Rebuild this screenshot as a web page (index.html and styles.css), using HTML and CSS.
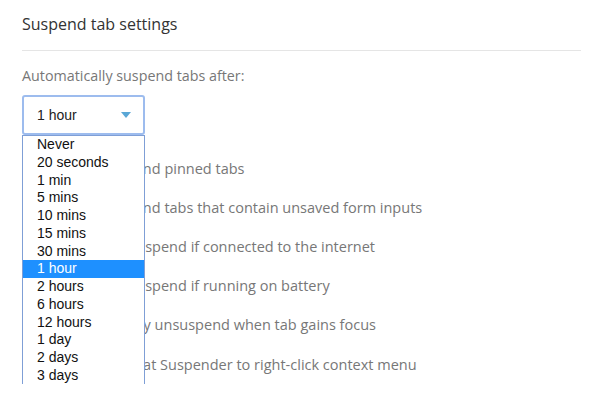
FILE: index.html
```html
<!DOCTYPE html>
<html>
<head>
<meta charset="utf-8">
<link rel="stylesheet" href="styles.css">
</head>
<body>
<div class="page">
  <h2 class="title">Suspend tab settings</h2>
  <div class="field-label">Automatically suspend tabs after:</div>
  <div class="select-wrap">
    <div class="select">
      <span class="select-value">1 hour</span>
      <span class="caret"></span>
    </div>
    <ul class="dropdown">
      <li>Never</li>
      <li>20 seconds</li>
      <li>1 min</li>
      <li>5 mins</li>
      <li>10 mins</li>
      <li>15 mins</li>
      <li>30 mins</li>
      <li class="selected">1 hour</li>
      <li>2 hours</li>
      <li>6 hours</li>
      <li>12 hours</li>
      <li>1 day</li>
      <li>2 days</li>
      <li>3 days</li>
    </ul>
  </div>
  <div class="options">
    <div class="option"><span class="check"></span><span>Never suspend pinned tabs</span></div>
    <div class="option"><span class="check"></span><span>Never suspend tabs that contain unsaved form inputs</span></div>
    <div class="option"><span class="check"></span><span>Only auto-suspend if connected to the internet</span></div>
    <div class="option"><span class="check"></span><span>Only auto-suspend if running on battery</span></div>
    <div class="option"><span class="check"></span><span>Automatically unsuspend when tab gains focus</span></div>
    <div class="option"><span class="check"></span><span>Add The Great Suspender to right-click context menu</span></div>
  </div>
</div>
</body>
</html>
```
FILE: styles.css
```css
html, body {
  margin: 0;
  padding: 0;
  background: #fff;
}
.page {
  padding: 13px 19px 0 22px;
  font-family: "Open Sans", "Liberation Sans", sans-serif;
}
.title {
  margin: 0;
  font-size: 16px;
  font-weight: 400;
  line-height: 22px;
  color: #333;
  padding-bottom: 15px;
  border-bottom: 1px solid #e5e5e5;
}
.field-label {
  margin-top: 15px;
  font-size: 14.3px;
  line-height: 19px;
  color: #777;
}
.select-wrap {
  position: relative;
  margin-top: 10px;
  width: 123px;
}
.select {
  box-sizing: border-box;
  width: 123px;
  height: 40px;
  border: 2px solid #9dbcee;
  border-radius: 3px;
  display: flex;
  align-items: center;
  justify-content: space-between;
  padding: 0 12px 0 13px;
  font-family: "Liberation Sans", Arial, sans-serif;
  font-size: 14px;
  color: #222;
}
.caret {
  width: 0;
  height: 0;
  border-left: 5px solid transparent;
  border-right: 5px solid transparent;
  border-top: 6px solid #5aa7d6;
}
.dropdown {
  position: absolute;
  left: 0;
  top: 40px;
  z-index: 2;
  box-sizing: border-box;
  width: 123px;
  margin: 0;
  padding: 0;
  list-style: none;
  background: #fff;
  border: 1px solid #7f9fd6;
  font-family: "Liberation Sans", Arial, sans-serif;
  font-size: 14px;
  color: #111;
}
.dropdown li {
  height: 17.75px;
  line-height: 17.75px;
  padding-left: 14px;
}
.dropdown li.selected {
  background: #1e90ff;
  color: #fff;
}
.options {
  margin-top: 13.5px;
}
.option {
  display: flex;
  align-items: center;
  height: 39.2px;
  font-size: 14.5px;
  color: #777;
}
.check {
  box-sizing: border-box;
  width: 18px;
  height: 18px;
  border: 1px solid #bbb;
  border-radius: 2px;
  margin-right: 19px;
  flex: none;
}
```
